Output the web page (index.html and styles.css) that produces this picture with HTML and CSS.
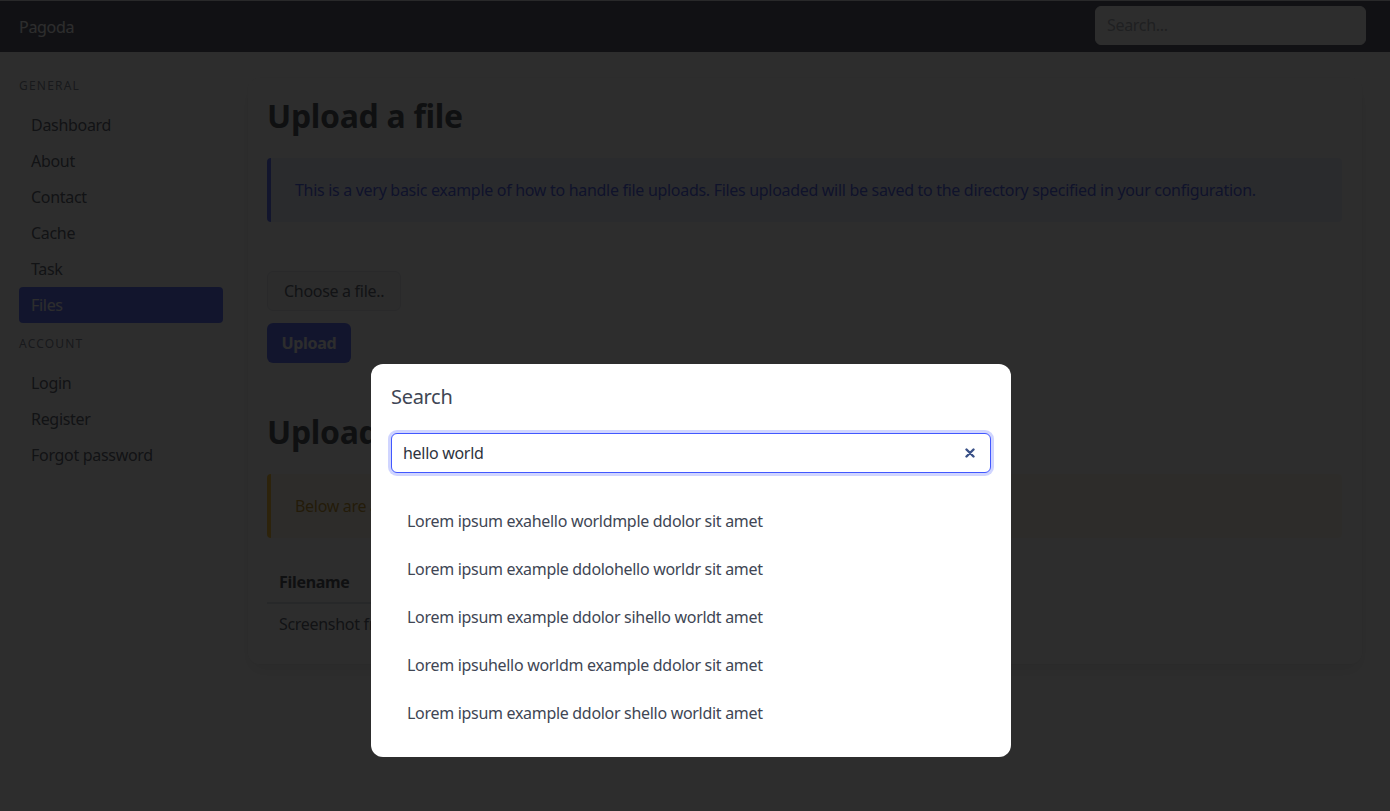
FILE: index.html
```html
<!DOCTYPE html>
<html lang="en">
<head>
<meta charset="utf-8">
<title>Pagoda</title>
<link rel="stylesheet" href="styles.css">
</head>
<body>
<nav class="navbar">
  <a class="brand">Pagoda</a>
  <div class="nav-search">
    <input class="nav-input" type="text" placeholder="Search...">
  </div>
</nav>

<div class="page">
  <aside class="menu">
    <p class="menu-label">General</p>
    <ul class="menu-list">
      <li><a>Dashboard</a></li>
      <li><a>About</a></li>
      <li><a>Contact</a></li>
      <li><a>Cache</a></li>
      <li><a>Task</a></li>
      <li><a class="is-active">Files</a></li>
    </ul>
    <p class="menu-label spaced">Account</p>
    <ul class="menu-list">
      <li><a>Login</a></li>
      <li><a>Register</a></li>
      <li><a>Forgot password</a></li>
    </ul>
  </aside>

  <main class="box">
    <h1 class="title">Upload a file</h1>
    <div class="message is-link">
      <div class="message-body">This is a very basic example of how to handle file uploads. Files uploaded will be saved to the directory specified in your configuration.</div>
    </div>
    <form class="upload-form">
      <div class="field">
        <label class="file-cta">Choose a file..</label>
      </div>
      <div class="field">
        <button class="button" type="button">Upload</button>
      </div>
    </form>

    <h2 class="title second">Uploaded files</h2>
    <div class="message is-warning">
      <div class="message-body">Below are all of the files you have uploaded.</div>
    </div>
    <table class="table">
      <thead>
        <tr><th>Filename</th></tr>
      </thead>
      <tbody>
        <tr><td>Screenshot from 2024-06-12.png</td></tr>
      </tbody>
    </table>
  </main>
</div>

<div class="modal">
  <div class="modal-background"></div>
  <div class="modal-card">
    <p class="modal-title">Search</p>
    <div class="search-control">
      <input class="search-input" type="text" value="hello world">
      <span class="clear-icon">
        <svg width="10" height="10" viewBox="0 0 10 10" aria-hidden="true">
          <path d="M1.5 1.5 L8.5 8.5 M8.5 1.5 L1.5 8.5" stroke="#3a5187" stroke-width="2.4" stroke-linecap="round" fill="none"/>
        </svg>
      </span>
    </div>
    <ul class="results">
      <li><a>Lorem ipsum exahello worldmple ddolor sit amet</a></li>
      <li><a>Lorem ipsum example ddolohello worldr sit amet</a></li>
      <li><a>Lorem ipsum example ddolor sihello worldt amet</a></li>
      <li><a>Lorem ipsuhello worldm example ddolor sit amet</a></li>
      <li><a>Lorem ipsum example ddolor shello worldit amet</a></li>
    </ul>
  </div>
</div>
</body>
</html>
```

FILE: styles.css
```css
* {
  box-sizing: border-box;
}

html,
body {
  margin: 0;
  height: 100%;
}

body {
  font-family: "Noto Sans", "Open Sans", sans-serif;
  font-size: 16px;
  line-height: 24px;
  letter-spacing: -0.019em;
  color: #404654;
  background: #ffffff;
  overflow: hidden;
}

a {
  text-decoration: none;
  color: inherit;
}

/* Navbar */
.navbar {
  height: 52px;
  background: #383c52;
  border-top: 1px solid #e4e4e8;
  display: flex;
  align-items: center;
  justify-content: space-between;
  padding: 0 24px 0 19px;
}

.brand {
  color: #ffffff;
  font-size: 16px;
}

.nav-input {
  width: 271px;
  height: 39px;
  margin-top: -3px;
  border: 1px solid #ffffff;
  border-radius: 6px;
  background: #ffffff;
  font: inherit;
  letter-spacing: inherit;
  padding: 0 11px;
  outline: none;
}

.nav-input::placeholder {
  color: #9ca1ab;
}

/* Layout */
.page {
  display: flex;
  align-items: flex-start;
  gap: 25px;
  padding: 25px 0 0 19px;
}

/* Menu */
.menu {
  width: 204px;
  flex: none;
}

.menu-label {
  margin: 0 0 12px;
  font-size: 12px;
  line-height: 18px;
  letter-spacing: 0.1em;
  text-transform: uppercase;
  color: #6b7385;
}

.menu-label.spaced {
  margin-top: 12px;
}

.menu-list {
  list-style: none;
  margin: 0;
  padding: 0;
}

.menu-list a {
  display: block;
  padding: 6px 12px;
  border-radius: 4px;
  color: #404654;
}

.menu-list a.is-active {
  background: #4258ff;
  color: #ffffff;
}

/* Box */
.box {
  width: 1114px;
  margin-top: 1px;
  padding: 20px 20px 20px 19px;
  background: #ffffff;
  border-radius: 12px;
  box-shadow: 0 8px 16px -2px rgba(10, 10, 10, 0.1), 0 0 0 1px rgba(10, 10, 10, 0.02);
}

.title {
  margin: 0 0 24px;
  font-size: 32px;
  line-height: 36px;
  font-weight: 700;
  color: #2e333d;
}

.title.second {
  margin-top: 51px;
}

.message {
  margin-bottom: 24px;
}

.message-body {
  padding: 20px 24px;
  border-left: 4px solid;
  border-radius: 4px;
}

.message.is-link .message-body {
  background: #ebeeff;
  border-color: #4258ff;
  color: #2f47ee;
}

.message.is-warning .message-body {
  background: #fff9eb;
  border-color: #ffb70f;
  color: #b88300;
}

/* Form */
.upload-form {
  padding-top: 25px;
}

.field {
  margin-bottom: 12px;
}

.file-cta {
  display: inline-block;
  height: 40px;
  padding: 7px 16px;
  border: 1px solid #dfe2e8;
  border-radius: 6px;
  background: #f5f6f8;
  color: #404654;
}

.button {
  height: 40px;
  padding: 0 14.5px;
  border: none;
  border-radius: 6px;
  background: #4258ff;
  color: #ffffff;
  font: inherit;
  letter-spacing: inherit;
  font-weight: 700;
}

/* Table */
.table {
  border-collapse: collapse;
}

.table th,
.table td {
  padding: 8px 12px;
  text-align: left;
  vertical-align: top;
}

.table th {
  font-weight: 700;
  color: #2e333d;
  border-bottom: 2px solid #d5d9e0;
}

/* Modal */
.modal-background {
  position: fixed;
  inset: 0;
  background: rgba(10, 10, 10, 0.86);
}

.modal-card {
  position: fixed;
  left: 371px;
  top: 364px;
  width: 640px;
  padding: 20px;
  background: #ffffff;
  border-radius: 12px;
}

.modal-title {
  margin: 0 0 23px;
  font-size: 20px;
  line-height: 26px;
  color: #404654;
}

.search-control {
  position: relative;
}

.search-input {
  display: block;
  width: 600px;
  height: 40px;
  padding: 0 36px 0 11px;
  border: 1px solid #4258ff;
  border-radius: 6px;
  box-shadow: 0 0 0 3px rgba(66, 88, 255, 0.25);
  font: inherit;
  letter-spacing: inherit;
  color: #2e333d;
  outline: none;
}

.clear-icon {
  position: absolute;
  right: 16px;
  top: 15px;
  width: 10px;
  height: 10px;
  display: flex;
}

.results {
  list-style: none;
  margin: 24px 0 0;
  padding: 0;
}

.results a {
  display: block;
  padding: 12px 16px;
  color: #404654;
}
```
